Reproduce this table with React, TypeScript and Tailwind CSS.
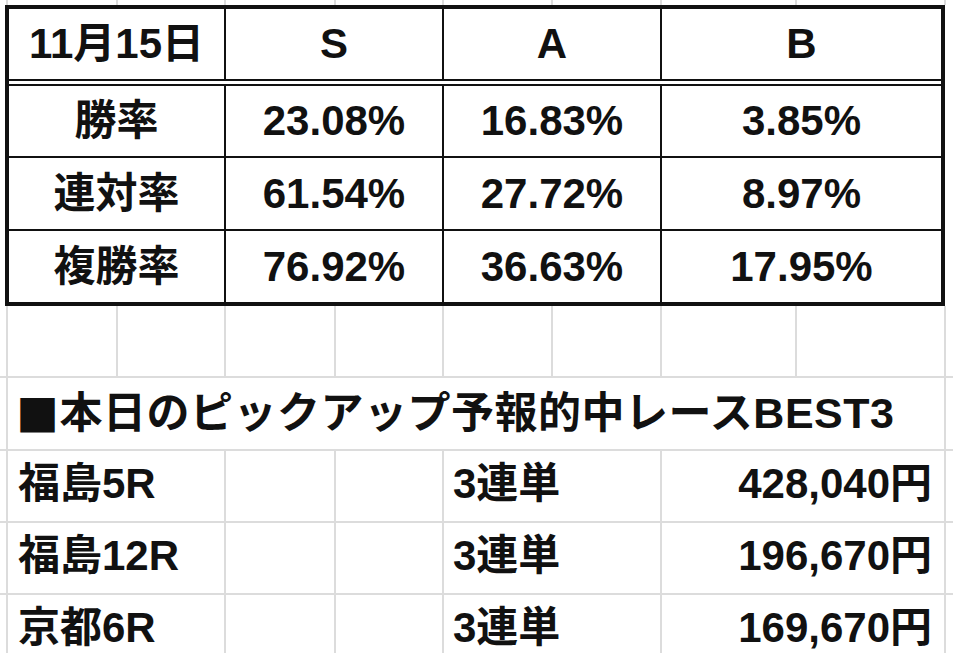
import type { JSX } from 'react';

const statRows = [
  { label: '勝率', s: '23.08%', a: '16.83%', b: '3.85%' },
  { label: '連対率', s: '61.54%', a: '27.72%', b: '8.97%' },
  { label: '複勝率', s: '76.92%', a: '36.63%', b: '17.95%' },
];

const picks = [
  { race: '福島5R', kind: '3連単', pay: '428,040円' },
  { race: '福島12R', kind: '3連単', pay: '196,670円' },
  { race: '京都6R', kind: '3連単', pay: '169,670円' },
];

// sheet columns: lead gutter + 8 spreadsheet columns
const sheetCols = 'grid grid-cols-[8px_110px_108px_110px_108px_109px_109px_135px_149px]';
const line = 'border-r-2 border-[#dcdcdc]';

const EmptyRow = ({ h, bottom }: { h: string; bottom?: boolean }): JSX.Element => (
  <div className={`${sheetCols} ${h} ${bottom ? 'border-b-2 border-[#dcdcdc]' : ''}`}>
    {Array.from({ length: 9 }).map((_, i) => (
      <div key={i} className={line} />
    ))}
  </div>
);

export default function App(): JSX.Element {
  return (
    <div
      className="w-[953px] h-[653px] overflow-hidden bg-white text-[#111] font-bold"
      style={{ fontFamily: '"Liberation Sans", "Noto Sans CJK JP", sans-serif' }}
    >
      <div className="relative">
        {/* gridlines peeking above the table */}
        <EmptyRow h="h-[5px]" />

        {/* stats table */}
        <div className="ml-[5px] w-[940px] border-4 border-[#111] text-[42px] leading-none">
          <div className="grid grid-cols-[217px_218px_218px_1fr] h-[77px] border-b-[7px] border-double border-[#111]">
            <div className="flex items-center justify-center border-r-2 border-[#111]">11月15日</div>
            <div className="flex items-center justify-center border-r-2 border-[#111]">S</div>
            <div className="flex items-center justify-center border-r-2 border-[#111]">A</div>
            <div className="flex items-center justify-center">B</div>
          </div>
          {statRows.map((r, i) => (
            <div
              key={r.label}
              className={`grid grid-cols-[217px_218px_218px_1fr] ${
                i === 0 ? 'h-[72px] border-b-2' : i === 1 ? 'h-[73px] border-b-2' : 'h-[71px]'
              } border-[#111]`}
            >
              <div className="flex items-center justify-center border-r-2 border-[#111]">{r.label}</div>
              <div className="flex items-center justify-center border-r-2 border-[#111]">{r.s}</div>
              <div className="flex items-center justify-center border-r-2 border-[#111]">{r.a}</div>
              <div className="flex items-center justify-center">{r.b}</div>
            </div>
          ))}
        </div>

        {/* blank row */}
        <EmptyRow h="h-[72px]" bottom />

        {/* title row */}
        <div className={`${sheetCols} h-[73px] border-b-2 border-[#dcdcdc] text-[43px] leading-none`}>
          <div className={line} />
          <div className={`col-span-8 ${line} flex items-center pl-[8px] tracking-[0.5px] whitespace-nowrap`}>
            <span style={{ fontFamily: '"Noto Sans CJK JP", sans-serif' }}>■</span>
            本日のピックアップ予報的中レースBEST3
          </div>
        </div>

        {/* pick rows */}
        {picks.map((p) => (
          <div
            key={p.race}
            className={`${sheetCols} h-[72px] border-b-2 border-[#dcdcdc] text-[42px] leading-none`}
          >
            <div className={line} />
            <div className={`col-span-2 ${line} flex items-center pl-[10px] pb-[5px] whitespace-nowrap`}>{p.race}</div>
            <div className={line} />
            <div className={line} />
            <div className={`col-span-2 ${line} flex items-center pl-[9px] pb-[5px] whitespace-nowrap`}>{p.kind}</div>
            <div className={`col-span-2 ${line} flex items-center justify-end pr-[12px] pb-[5px] whitespace-nowrap`}>
              {p.pay}
            </div>
          </div>
        ))}
      </div>
    </div>
  );
}
